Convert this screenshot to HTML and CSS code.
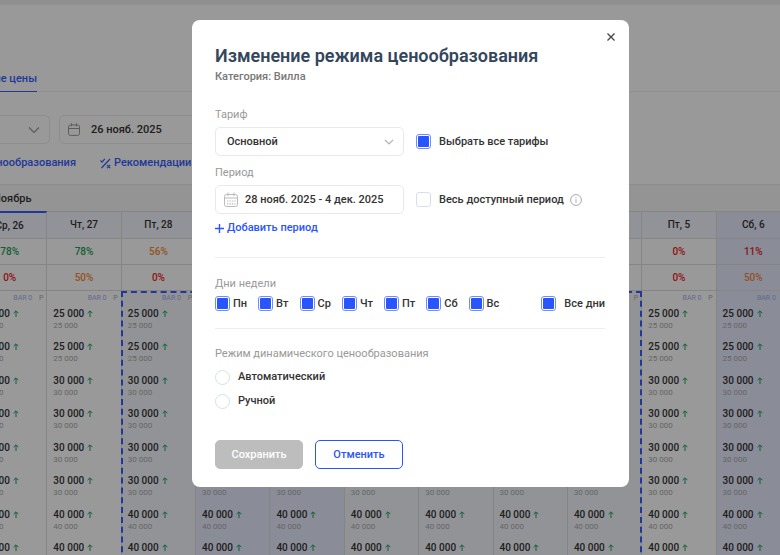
FILE: index.html
```html
<!DOCTYPE html>
<html class="no-js" lang="ru">
    <head>
        <meta charset="utf-8">
        <title>Изменение режима ценообразования</title>
        <meta name="viewport" content="width=device-width, initial-scale=1">

        <link rel="stylesheet" href="styles.css">
    </head>
    <body>

        <div class="site">
            <div class="topbar"></div>

            <nav class="tabs">
                <a class="tabs__link" href="#">ие цены</a>
            </nav>

            <div class="filters">
                <button class="filters__field filters__field--select" aria-label="Категория">
                    <svg width="12" height="8" viewBox="0 0 12 8" fill="none" stroke="#999" stroke-width="1.2"><path d="M1 1.5l5 5 5-5"/></svg>
                </button>
                <button class="filters__field filters__field--date">
                    <svg width="12" height="13" viewBox="0 0 12 13" fill="none" stroke="#999"><rect x=".5" y="2" width="11" height="10.4" rx="2"/><path d="M.5 5.5h11M3.5.3v3M8.5.3v3"/></svg>
                    26 нояб. 2025
                </button>
            </div>

            <div class="links">
                <a class="links__item links__item--mode" href="#">нообразования</a>
                <a class="links__item" href="#">
                    <svg width="11" height="11" viewBox="0 0 11 11" fill="none" stroke="#3a5cff" stroke-width="1.2"><path d="M1.5 10L10 1M.5 2.5l1.6 1.6L4.8.8M7 7l3.2 3.2M10.2 7L7 10.2"/></svg>
                    Рекомендации
                    <span class="links__badge"></span>
                </a>
            </div>

            <div class="calendar">
                <div class="calendar__month">Ноябрь</div>
                <table class="calendar__table">
                    <thead></thead>
                    <tbody></tbody>
                </table>
                <div class="calendar__range"></div>
            </div>
        </div>


        <div class="dialog">
            <form class="dialog__panel">
                <button type="button" class="dialog__close" aria-label="Закрыть">
                    <svg width="8" height="8" viewBox="0 0 8 8" fill="none" stroke="#444" stroke-width="1.3"><path d="M.5.5l7 7M7.5.5l-7 7"/></svg>
                </button>

                <h2 class="dialog__title">Изменение режима ценообразования</h2>
                <p class="dialog__subtitle">Категория: Вилла</p>

                <div class="group">
                    <label class="caption" for="tariff">Тариф</label>
                    <div class="row">
                        <div class="field">
                            <select id="tariff" class="field__control">
                                <option>Основной</option>
                            </select>
                            <svg class="field__arrow" width="10" height="6" viewBox="0 0 10 6" fill="none" stroke="#b3b3b3" stroke-width="1.2"><path d="M1 1l4 4 4-4"/></svg>
                        </div>
                        <label class="check"><input type="checkbox" class="check__box" checked>Выбрать все тарифы</label>
                    </div>

                    <label class="caption" for="period">Период</label>
                    <div class="row">
                        <div class="field">
                            <svg class="field__icon" width="14" height="15" viewBox="0 0 14 15" fill="none" stroke="#b9b9b9"><rect x=".5" y="2.5" width="13" height="12" rx="2"/><path d="M.5 6h13M4 .5v3.5M10 .5v3.5"/><path d="M3 9h8.5M3 11.8h8.5" stroke-width="1.2" stroke-dasharray="1.4 1"/></svg>
                            <input id="period" class="field__control field__control--date" type="text" value="28 нояб. 2025 - 4 дек. 2025">
                        </div>
                        <label class="check"><input type="checkbox" class="check__box">Весь доступный период</label>
                        <svg class="info" width="12" height="12" viewBox="0 0 12 12" fill="none" stroke="#aaa"><circle cx="6" cy="6" r="5.4"/><path d="M6 5.3v3.4M6 3.2v1.1"/></svg>
                    </div>

                    <button type="button" class="add">
                        <svg width="9" height="9" viewBox="0 0 9 9" stroke="#2955ff" stroke-width="1.4"><path d="M4.5 0v9M0 4.5h9"/></svg>
                        Добавить период
                    </button>
                </div>

                <fieldset class="group group--days">
                    <legend class="caption">Дни недели</legend>
                    <div class="days">
                        <label class="day"><input type="checkbox" class="check__box" checked>Пн</label>
                        <label class="day"><input type="checkbox" class="check__box" checked>Вт</label>
                        <label class="day"><input type="checkbox" class="check__box" checked>Ср</label>
                        <label class="day"><input type="checkbox" class="check__box" checked>Чт</label>
                        <label class="day"><input type="checkbox" class="check__box" checked>Пт</label>
                        <label class="day"><input type="checkbox" class="check__box" checked>Сб</label>
                        <label class="day"><input type="checkbox" class="check__box" checked>Вс</label>
                        <label class="check check--all"><input type="checkbox" class="check__box" checked>Все дни</label>
                    </div>
                </fieldset>

                <fieldset class="group group--mode">
                    <legend class="caption">Режим динамического ценообразования</legend>
                    <label class="check check--radio"><input type="radio" name="mode" class="check__box check__box--radio">Автоматический</label>
                    <label class="check check--radio"><input type="radio" name="mode" class="check__box check__box--radio">Ручной</label>
                </fieldset>

                <div class="actions">
                    <button class="btn btn--save" disabled>Сохранить</button>
                    <button type="button" class="btn btn--cancel">Отменить</button>
                </div>
            </form>
        </div>

        <script src="script.js"></script>
    </body>
</html>
```
FILE: styles.css
```css
* {
    box-sizing: border-box;
}

body {
    margin: 0;
    height: 100vh;
    overflow: hidden;
    font-family: Roboto, "Open Sans", "Liberation Sans", sans-serif;
    font-size: 11px;
    font-weight: 500;
    line-height: 14px;
    color: #333;
    background-color: #fff;
}

a {
    color: #3a5cff;
    text-decoration: none;
}

button,
input,
select {
    font: inherit;
    color: inherit;
}

fieldset {
    margin: 0;
    padding: 0;
    border: 0;
}

/* Page */

.topbar {
    height: 5px;
    background-color: #f0f0f0;
}

.tabs {
    display: flex;
    margin-top: 67px;
    border-bottom: 1px solid #f0f0f0;
}

.tabs__link {
    display: flex;
    justify-content: flex-end;
    width: 37px;
    height: 20px;
    margin-bottom: -1px;
    white-space: nowrap;
    border-bottom: 1px solid #3a5cff;
}

.filters {
    display: flex;
    gap: 9px;
    margin-top: 23px;
}

.filters__field {
    display: flex;
    align-items: center;
    height: 29px;
    background-color: transparent;
    border: 1px solid #ececec;
    border-radius: 5px;
}

.filters__field--select {
    justify-content: flex-end;
    width: 54px;
    margin-left: -4px;
    padding: 0 9px;
}

.filters__field--date {
    gap: 11px;
    width: 190px;
    padding: 0 8px;
}

.links {
    display: flex;
    gap: 24px;
    height: 40px;
    padding-top: 12px;
}

.links__item {
    display: flex;
    gap: 3px;
    height: 14px;
    align-items: center;
    white-space: nowrap;
}

.links__item--mode {
    justify-content: flex-end;
    width: 76px;
}

.links__badge {
    width: 7px;
    height: 7px;
    border-radius: 50%;
    background-color: #f22;
}

/* Calendar */

.calendar {
    position: relative;
    width: calc(100% + 38px);
    margin-left: -27px;
}

.calendar__month {
    height: 27px;
    padding: 7px 20px;
    background-color: #f7f7f7;
    border-top: 1px solid #ececec;
}

.calendar__table {
    width: 100%;
    table-layout: fixed;
    border-collapse: separate;
    border-spacing: 0;
}

.calendar__table th,
.calendar__table td {
    padding: 0;
    border-right: 1px solid #dedede;
}

.calendar__table thead th,
.calendar__table thead td {
    height: 26px;
    font-size: 10px;
    font-weight: 500;
    text-align: center;
    border-bottom: 1px solid #dedede;
}

.calendar__table thead th {
    height: 28px;
    background-color: #f3f6fd;
    border-top: 1px solid #dedede;
}

.calendar__table thead .is-today {
    border-top: 2px solid #3a5cff;
}

.calendar__table .is-selected {
    background-color: #f3f6fb;
}

.calendar__table .is-weekend {
    background-color: #e7e9fc;
}

.calendar__table .high { color: #1d9e5a; }
.calendar__table .middle { color: #f28a3c; }
.calendar__table .low { color: #f02020; }

.calendar__table .bar {
    height: 13px;
    padding-right: 3px;
    font-size: 7px;
    font-weight: 400;
    line-height: 12px;
    text-align: right;
    color: #a3aff0;
}

.bar__type {
    margin-left: 5px;
    color: #aaa;
}

.calendar__table .price {
    height: 33px;
    padding: 3px 0 0 6px;
    font-size: 10px;
    line-height: 14px;
    vertical-align: top;
}

.calendar__table tr:nth-child(odd) .price {
    height: 34px;
}

.price__arrow {
    margin-left: 3px;
}

.price__base {
    display: block;
    font-size: 8px;
    font-weight: 400;
    line-height: 10px;
    color: #aaa;
}

/* frame round the chosen dates, third to ninth column of eleven */
.calendar__range {
    position: absolute;
    top: 107px;
    bottom: 0;
    left: calc(200% / 11 - 1px);
    width: calc(700% / 11 + 1px);
    border: 2px dashed #3a5cff;
    border-bottom: 0;
}

/* Dialog */

.dialog {
    position: fixed;
    top: 0;
    right: 0;
    bottom: 0;
    left: 0;
    display: flex;
    align-items: flex-start;
    justify-content: center;
    padding: 20px 0 0 41px;
    background-color: rgba(0,0,0,0.4);
}

.dialog__panel {
    position: relative;
    width: 437px;
    max-width: 100%;
    padding: 24px 24px 18px 23px;
    background-color: #fff;
    border-radius: 8px;
}

.dialog__close {
    position: absolute;
    top: 9px;
    right: 10px;
    display: flex;
    padding: 4px;
    background: none;
    border: 0;
}

.dialog__title {
    margin: 0;
    font-size: 18px;
    font-weight: 600;
    line-height: 24px;
    white-space: nowrap;
    color: #34465c;
}

.dialog__subtitle {
    margin: 2px 0 0;
    color: #777;
}

.group {
    padding-bottom: 22px;
    border-bottom: 1px solid #eee;
}

.dialog__subtitle + .group {
    margin-top: 23px;
}

.caption {
    display: block;
    padding: 0;
    margin-bottom: 4px;
    font-weight: 400;
    line-height: 16px;
    color: #999;
}

.row {
    display: flex;
    align-items: center;
    margin-bottom: 9px;
}

.field {
    position: relative;
    width: 189px;
    margin-right: 12px;
}

.field__control {
    display: block;
    width: 100%;
    height: 29px;
    padding: 0 11px;
    appearance: none;
    background-color: #fff;
    border: 1px solid #e9e9e9;
    border-radius: 5px;
}

.field__control--date {
    padding-left: 29px;
    padding-right: 0;
}

.field__arrow {
    position: absolute;
    top: 12px;
    right: 10px;
}

.field__icon {
    position: absolute;
    top: 7px;
    left: 9px;
}

.check,
.day {
    display: flex;
    align-items: center;
    white-space: nowrap;
}

.check {
    gap: 8px;
}

.day {
    gap: 3px;
}

.check__box {
    width: 15px;
    height: 15px;
    margin: 0;
    appearance: none;
    border: 1px solid #d5e0ee;
    border-radius: 3px;
}

.check__box:checked {
    padding: 1px;
    background-color: #2955ff;
    background-clip: content-box;
    border-color: #6d8cff;
}

.check__box--radio {
    border-radius: 50%;
}

.info {
    margin-left: 6px;
}

.add {
    display: flex;
    align-items: center;
    gap: 3px;
    padding: 0;
    margin-top: -2px;
    color: #2955ff;
    background: none;
    border: 0;
}

.group--days {
    padding-bottom: 17px;
}

.group--days .caption {
    padding-top: 18px;
}

.days {
    display: flex;
    gap: 11px;
}

.check--all {
    margin-left: auto;
}

.group--mode {
    padding-bottom: 0;
    border-bottom: 0;
}

.group--mode .caption {
    padding-top: 17px;
    margin-bottom: 3px;
}

.check--radio {
    height: 24px;
}

.actions {
    display: flex;
    gap: 12px;
    margin-top: 27px;
}

.btn {
    width: 88px;
    height: 29px;
    padding: 0;
    border: 1px solid #2955ff;
    border-radius: 5px;
    background-color: #fff;
    color: #2955ff;
}

.btn--save {
    border-color: #bdbdbd;
    background-color: #bdbdbd;
    color: #fff;
}
```
FILE: script.js
```js
(function() {

    // [day, occupancy, occupancy of the category]
    const days = [
        ['Ср, 26', 78, 0],
        ['Чт, 27', 78, 50],
        ['Пт, 28', 56, 0],
        ['Сб, 29', 56, 0],
        ['Вс, 30', 56, 0],
        ['Пн, 1', 0, 0],
        ['Вт, 2', 0, 0],
        ['Ср, 3', 0, 0],
        ['Чт, 4', 0, 0],
        ['Пт, 5', 0, 0],
        ['Сб, 6', 11, 50]
    ];
    const prices = ['25 000', '25 000', '30 000', '30 000', '30 000', '30 000', '40 000', '40 000'];

    const arrow = '<svg class="price__arrow" width="6" height="7" viewBox="0 0 6 7" fill="none" stroke="#1d9e5a"><path d="M3 7V1M.6 3.2L3 .8l2.4 2.4"/></svg>';

    function dayClass(day, i) {
        if(/^(Сб|Вс)/.test(day[0])) {
            return 'is-weekend';
        }
        return i > 1 && i < 9 ? 'is-selected' : '';
    }

    function row(cell) {
        return '<tr>' + days.map(cell).join('') + '</tr>';
    }

    function percent(index) {
        return row((day) => {
            const value = day[index];
            const level = value > 70 ? 'high' : value > 40 ? 'middle' : 'low';
            const weekend = /^(Сб|Вс)/.test(day[0]) ? 'is-weekend' : '';
            return `<td class="${level} ${weekend}">${value}%</td>`;
        });
    }

    document.querySelector('.calendar__table thead').innerHTML =
        row((day, i) => `<th class="${i === 0 ? 'is-today' : dayClass(day, -1)}">${day[0]}</th>`) +
        percent(1) +
        percent(2);

    document.querySelector('.calendar__table tbody').innerHTML =
        row((day, i) => `<td class="bar ${dayClass(day, i)}">BAR 0 <span class="bar__type">P</span></td>`) +
        prices.map((price) => row((day, i) =>
            `<td class="price ${dayClass(day, i)}">${price}${arrow}<span class="price__base">${price}</span></td>`
        )).join('');

})();
```
